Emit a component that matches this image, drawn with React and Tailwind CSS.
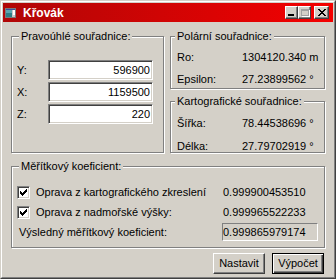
import React from "react";

const sunken =
  "border border-t-[#808080] border-l-[#808080] border-r-white border-b-white shadow-[inset_1px_1px_0_#404040,inset_-1px_-1px_0_#d4d0c8]";
const etched =
  "border border-[#808080] shadow-[inset_1px_1px_0_#ffffff,1px_1px_0_#ffffff]";

function Legend({ children, ml }) {
  return (
    <div className={`-mt-[7px] ${ml} px-[2px] bg-[#d4d0c8] w-fit leading-[13px] h-[13px] whitespace-nowrap`}>
      {children}
    </div>
  );
}

function Edit({ value }) {
  return (
    <div className={`h-[20px] w-[105px] bg-white ${sunken} flex items-center justify-end pr-[2px]`}>
      {value}
    </div>
  );
}

function Check() {
  return (
    <div className={`w-[13px] h-[13px] bg-white ${sunken} flex items-center justify-center shrink-0`}>
      <svg width="7" height="7" viewBox="0 0 7 7" shapeRendering="crispEdges">
        <path d="M6 0h1v3h-1zM5 1h1v3h-1zM4 2h1v3h-1zM3 3h1v3h-1zM2 4h1v3h-1zM1 3h1v3h-1zM0 2h1v3h-1z" fill="#000" />
      </svg>
    </div>
  );
}

function CaptionBtn({ children, w }) {
  return (
    <div className={`${w} h-[13px] bg-[#d4d0c8] border border-t-white border-l-white border-r-[#404040] border-b-[#404040] shadow-[inset_-1px_-1px_0_#808080] flex items-center justify-center`}>
      {children}
    </div>
  );
}

export default function App() {
  return (
    <div className="w-[336px] h-[279px] bg-[#d4d0c8] border border-t-[#d4d0c8] border-l-[#d4d0c8] border-r-[#404040] border-b-[#404040] font-['Liberation_Sans',Arial,sans-serif] text-[11px] text-black overflow-hidden">
      <div className="h-full border border-t-white border-l-white border-r-[#808080] border-b-[#808080] p-[1px] flex flex-col">
        {/* Title bar */}
        <div className="h-[19px] bg-gradient-to-r from-[#b00606] to-[#f40000] flex items-center pl-[2px] pr-[4px]">
          <svg width="11" height="10" viewBox="0 0 11 10" shapeRendering="crispEdges" className="shrink-0">
            <rect x="0" y="0" width="11" height="10" fill="#c8c8c8" />
            <rect x="0.5" y="0.5" width="10" height="9" fill="none" stroke="#7a7a7a" />
            <rect x="1" y="2" width="6" height="7" fill="#2e7f86" />
            <rect x="1" y="2" width="6" height="3" fill="#5aa6b0" />
            <rect x="8" y="2" width="2" height="5" fill="#ffffff" />
            <rect x="1" y="1" width="9" height="1" fill="#3a4fa0" />
          </svg>
          <span className="ml-[7px] font-bold text-white text-[12px] leading-none">Křovák</span>
          <div className="ml-auto flex items-center">
            <CaptionBtn w="w-[13px]">
              <div className="w-[6px] h-[2px] bg-black mt-[5px] -ml-[1px]" />
            </CaptionBtn>
            <CaptionBtn w="w-[13px]">
              <div className="w-[8px] h-[7px] border border-t-2 border-[#a0a0a0] shadow-[1px_1px_0_#ffffff]" />
            </CaptionBtn>
            <div className="w-[3px]" />
            <CaptionBtn w="w-[15px]">
              <svg width="8" height="7" viewBox="0 0 8 7" shapeRendering="crispEdges">
                <path d="M0 0h2v1h-2zM6 0h2v1h-2zM1 1h2v1h-2zM5 1h2v1h-2zM2 2h4v1h-4zM3 3h2v1h-2zM2 4h4v1h-4zM1 5h2v1h-2zM5 5h2v1h-2zM0 6h2v1h-2zM6 6h2v1h-2z" fill="#000" />
              </svg>
            </CaptionBtn>
          </div>
        </div>

        {/* Body */}
        <div className="flex-1 px-[8px] pt-[14px] flex flex-col">
          <div className="grid grid-cols-[153px_155px] gap-x-[6px]">
            {/* Left group */}
            <div className={`h-[117px] ${etched} flex flex-col`}>
              <Legend ml="ml-[7px]">Pravoúhlé souřadnice:</Legend>
              <div className="mt-[17px] flex flex-col gap-[2px] pl-[5px]">
                {[
                  ["Y:", "596900"],
                  ["X:", "1159500"],
                  ["Z:", "220"],
                ].map(([l, v]) => (
                  <div key={l} className="flex items-center">
                    <span className="w-[31px]">{l}</span>
                    <Edit value={v} />
                  </div>
                ))}
              </div>
            </div>

            {/* Right column */}
            <div className="flex flex-col">
              <div className={`h-[53px] ${etched} flex flex-col`}>
                <Legend ml="ml-[4px]">Polární souřadnice:</Legend>
                <div className="mt-[7px] flex flex-col gap-[8px] pl-[6px]">
                  <div className="flex h-[14px] items-center">
                    <span className="w-[65px]">Ro:</span>
                    <span>1304120.340 m</span>
                  </div>
                  <div className="flex h-[14px] items-center">
                    <span className="w-[65px]">Epsilon:</span>
                    <span>27.23899562 °</span>
                  </div>
                </div>
              </div>
              <div className={`mt-[12px] h-[52px] ${etched} flex flex-col`}>
                <Legend ml="ml-[4px]">Kartografické souřadnice:</Legend>
                <div className="mt-[8px] flex flex-col gap-[9px] pl-[6px]">
                  <div className="flex h-[14px] items-center">
                    <span className="w-[65px]">Šířka:</span>
                    <span>78.44538696 °</span>
                  </div>
                  <div className="flex h-[14px] items-center">
                    <span className="w-[65px]">Délka:</span>
                    <span>27.79702919 °</span>
                  </div>
                </div>
              </div>
            </div>
          </div>

          {/* Bottom group */}
          <div className={`mt-[13px] h-[82px] ${etched} flex flex-col`}>
            <Legend ml="ml-[7px]">Měřítkový koeficient:</Legend>
            <div className="mt-[13px] flex flex-col pl-[5px]">
              <div className="flex items-center h-[13px]">
                <div className="w-[205px] flex items-center">
                  <Check />
                  <span className="ml-[6px] whitespace-nowrap">Oprava z kartografického zkreslení</span>
                </div>
                <span className="pl-[1px]">0.999900453510</span>
              </div>
              <div className="mt-[7px] flex items-center h-[13px]">
                <div className="w-[205px] flex items-center">
                  <Check />
                  <span className="ml-[6px] whitespace-nowrap">Oprava z nadmořské výšky:</span>
                </div>
                <span className="pl-[1px]">0.999965522233</span>
              </div>
              <div className="mt-[4px] flex items-center h-[18px]">
                <div className="w-[205px] pl-[2px] whitespace-nowrap">Výsledný měřítkový koeficient:</div>
                <div className="w-[96px] h-[18px] border border-t-[#808080] border-l-[#808080] border-r-white border-b-white flex items-center">
                  0.999865979174
                </div>
              </div>
            </div>
          </div>

          {/* Buttons */}
          <div className="mt-[5px] flex justify-end gap-[7px] pr-[1px]">
            <button className="w-[52px] h-[21px] bg-[#d4d0c8] border border-t-white border-l-white border-r-[#404040] border-b-[#404040] shadow-[inset_-1px_-1px_0_#808080] flex items-center justify-center">
              Nastavit
            </button>
            <button className="w-[52px] h-[21px] bg-[#d4d0c8] border border-black shadow-[inset_1px_1px_0_#ffffff,inset_-1px_-1px_0_#404040,inset_-2px_-2px_0_#808080] flex items-center justify-center">
              Výpočet
            </button>
          </div>
        </div>
      </div>
    </div>
  );
}
